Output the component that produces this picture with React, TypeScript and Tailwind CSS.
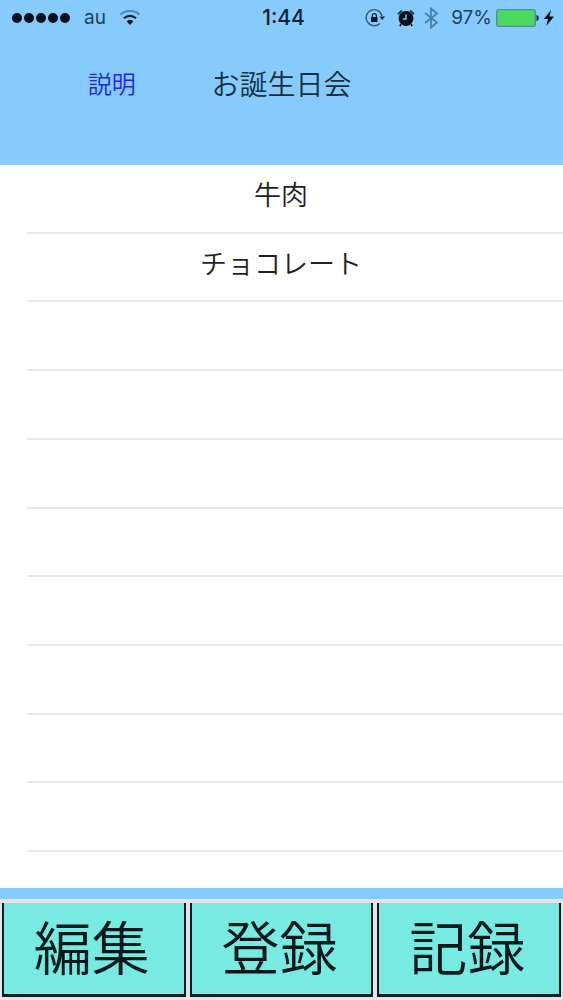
import React, { useState } from 'react';

const TOTAL_ROWS = 10;

// ステータスバー
function StatusBar() {
  return (
    <div className="grid h-9 grid-cols-[1fr_auto_1fr] items-center pr-2 pl-3 font-['Inter','Liberation_Sans',sans-serif] text-[19px] font-normal text-[#1d4160]">
      <div className="flex items-center">
        {/* 電波強度 */}
        <div className="flex gap-[2px]">
          {[0, 1, 2, 3, 4].map((dot) => (
            <span key={dot} className="size-[10px] rounded-full bg-[#04101c]" />
          ))}
        </div>
        <span className="ml-[14px]">au</span>
        <svg className="ml-[14px] h-4 w-5" viewBox="0 0 20 16" fill="none">
          <path d="M0.5 4.5C5.5 -0.2 14.5 -0.2 19.5 4.5" stroke="#4d85ab" strokeWidth="1.8" />
          <path d="M4 8.2C7.5 5 12.5 5 16 8.2" stroke="#0a2236" strokeWidth="2.2" />
          <path d="M6.7 11.2C8.6 9.5 11.4 9.5 13.3 11.2L10 15Z" fill="#04101c" />
        </svg>
      </div>

      <span className="text-[21px] font-medium text-[#0b2236]">1:44</span>

      <div className="flex items-center justify-end">
        {/* 画面回転ロック */}
        <svg className="h-5 w-5 shrink-0" viewBox="0 0 20 20" fill="none">
          <path d="M17 8A8 8 0 1 0 14.8 15.4" stroke="#2f5c7e" strokeWidth="1.4" />
          <path d="M14.5 8.5H20L17.2 12Z" fill="#0a2236" />
          <rect x="6" y="9" width="6.5" height="5" rx="0.5" fill="#04101c" />
          <path d="M7.3 9V7.6a2 2 0 0 1 4 0V9" stroke="#0a2236" strokeWidth="1.2" />
        </svg>
        {/* アラーム */}
        <svg className="ml-3 h-[18px] w-[18px] shrink-0" viewBox="0 0 18 18" fill="none">
          <circle cx="9" cy="9.5" r="7.4" fill="#04101c" />
          <path d="M1 5.2L5 1.5M17 5.2L13 1.5" stroke="#1b3d58" strokeWidth="2" />
          <path d="M4 15.2L2.8 17M14 15.2L15.2 17" stroke="#04101c" strokeWidth="1.6" />
          <path d="M9 5.5V10H5.8" stroke="#86cafb" strokeWidth="1.4" />
        </svg>
        {/* Bluetooth */}
        <svg className="ml-2 h-[22px] w-4 shrink-0" viewBox="0 0 16 22" fill="none">
          <path d="M2 6L14 15.5L8 20.5V1.5L14 6.5L2 16" stroke="#4a7fa6" strokeWidth="1.7" />
        </svg>
        <span className="ml-3">97%</span>
        {/* バッテリー */}
        <svg className="ml-1 h-[18px] w-[43px] shrink-0" viewBox="0 0 43 18" fill="none">
          <rect x="0.7" y="0.7" width="38.6" height="16.6" rx="2" fill="#4cd95f" stroke="#4f8f94" strokeWidth="1.3" />
          <path d="M41 6.5C42.6 7 42.6 11 41 11.5Z" fill="#0a2236" stroke="#0a2236" />
        </svg>
        <svg className="ml-1 h-4 w-3 shrink-0" viewBox="0 0 12 16">
          <path d="M8 0L0.8 9H5L3.2 16L11 6.4H6.6Z" fill="#04101c" />
        </svg>
      </div>
    </div>
  );
}

export default function ShoppingListScreen() {
  // 買い物リスト
  const [items] = useState<string[]>(['牛肉', 'チョコレート']);

  const rows = Array.from({ length: TOTAL_ROWS }, (_, i) => items[i] ?? '');
  const actions = ['編集', '登録', '記録'];

  return (
    <div className="flex min-h-screen flex-col bg-white font-['Noto_Sans_CJK_JP',sans-serif] font-[350] text-[#1f1f1f]">
      {/* ヘッダー */}
      <header className="bg-[#87cafc] pb-[62px]">
        <StatusBar />
        <div className="mt-[27px] grid grid-cols-[1fr_auto_1fr] items-center">
          <button type="button" className="ml-3 justify-self-center text-2xl leading-10 text-[#1a2be0]">
            説明
          </button>
          <h1 className="text-[28px] leading-10 text-[#14303f]">お誕生日会</h1>
        </div>
      </header>

      {/* リスト */}
      <ul className="flex flex-1 flex-col pb-9 pl-[27px]">
        {rows.map((item, index) => (
          <li
            key={index}
            className="flex min-h-10 flex-1 basis-0 items-center justify-center border-b-2 border-[#e9e7e9] pr-7 pb-2 text-[27px] leading-10"
          >
            {item}
          </li>
        ))}
      </ul>

      {/* フッター */}
      <footer className="border-t-[11px] border-[#87cafc]">
        <div className="grid grid-cols-3 gap-1 bg-[#e6e2e6] px-[2px] pt-1 pb-[3px]">
          {actions.map((label) => (
            <button
              key={label}
              type="button"
              className="border-x-2 border-b-[3px] border-[#0c1f22] bg-[#77ebe2] pr-1 pb-[6px] text-[58px] leading-[85px] text-[#04191c]"
            >
              {label}
            </button>
          ))}
        </div>
      </footer>
    </div>
  );
}
